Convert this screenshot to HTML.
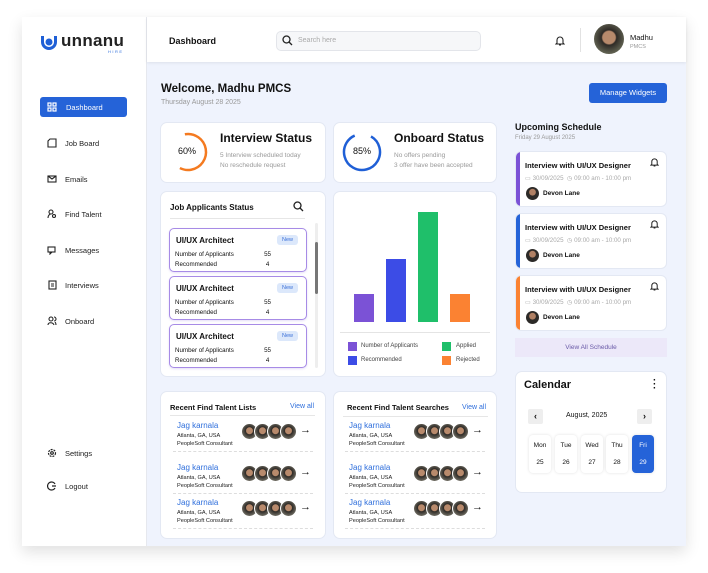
<!DOCTYPE html>
<html><head><meta charset="utf-8"><style>
*{box-sizing:border-box;margin:0;padding:0}
body{width:708px;height:573px;background:#fff;font-family:"Liberation Sans",sans-serif;color:#111;position:relative;overflow:hidden}
.a{position:absolute}
#app{left:22px;top:17px;width:664px;height:529px;background:#eff3fd;box-shadow:0 6px 14px rgba(0,0,0,.12)}
.side{left:22px;top:17px;width:125px;height:529px;background:#fff;border-right:1px solid #e6e8ee}
.hdr{left:147px;top:17px;width:539px;height:45px;background:#fff;box-shadow:0 1px 3px rgba(0,0,0,.08)}
.nav{left:47px;font-size:7.5px;color:#222;display:flex;align-items:center;gap:8px}
.nav svg{width:10px;height:10px}
.card{background:#fff;border-radius:7px;border:1px solid #e3e8f3}
.job{left:169px;width:138px;height:44px;border:1px solid #a78be6;border-radius:5px;background:#fff;box-shadow:0 1px 2px rgba(120,90,220,.2)}
.job b{position:absolute;left:6px;top:7px;font-size:8px}
.job .nw{position:absolute;right:8px;top:6px;background:#dce8fb;color:#3a6fd8;font-size:5.5px;padding:2px 5px;border-radius:3px}
.job .r1,.job .r2{position:absolute;left:5px;font-size:6.2px;width:96px}
.job .r1{top:22px}.job .r2{top:32px}
.job span.v{position:absolute;right:0}
.sch{left:515px;width:152px;height:56px;background:#fff;border-radius:6px;border:1px solid #e3e8f3;overflow:hidden}
.sch .bar{position:absolute;left:0;top:0;width:4px;height:100%}
.sch .tt{position:absolute;left:9px;top:9px;font-size:7.5px;font-weight:bold}
.sch .dt{position:absolute;left:9px;top:23px;font-size:6.2px;color:#aaa}
.sch .av{position:absolute;left:10px;top:35px;width:13px;height:13px;border-radius:50%;background:radial-gradient(circle at 50% 40%,#b08064 30%,#2c2a28 36%)}
.sch .nm{position:absolute;left:27px;top:38px;font-size:6.5px;font-weight:bold}
.sch .bell{position:absolute;right:7px;top:5px}
.row{position:absolute;width:140px;height:34px;border-bottom:1px dashed #ddd}
.row .n{position:absolute;left:4px;top:3px;color:#2f6fdc;font-size:8px}
.row .l{position:absolute;left:4px;top:14px;font-size:5.6px;line-height:8px;color:#222}
.row .avs{position:absolute;left:68px;top:5px;display:flex}
.row .avs i{width:17px;height:17px;border-radius:50%;margin-right:-4px;border:1px solid #fff;background:radial-gradient(circle at 50% 45%,#b88a6c 28%,#2e2a26 34%,#6d6a60 72%)}
.row .ar{position:absolute;right:2px;top:6px;font-size:11px}
.day{position:absolute;top:435px;width:22px;height:38px;border-radius:4px;background:#fff;box-shadow:0 0 3px rgba(0,0,0,.12);text-align:center;font-size:6.5px}
.day div{margin-top:7px}.day p{margin-top:10px}
</style></head><body>
<div class="a" id="app"></div>
<div class="a side"></div>
<div class="a hdr"></div>
<svg class="a" style="left:39px;top:34px" width="20" height="18" viewBox="0 0 20 18"><path d="M2 2v6a8 8 0 0 0 16 0V2h-3v6a5 5 0 0 1-10 0V2z" fill="#1f5fd6"/><circle cx="10" cy="8" r="3.5" fill="#1f5fd6"/></svg>
<div class="a" style="left:61px;top:31px;font-size:17px;font-weight:bold;letter-spacing:.3px;color:#222">unnanu</div>
<div class="a" style="left:108px;top:49px;font-size:4px;color:#2f6fdc;letter-spacing:1.5px">HIRE</div>
<div class="a" style="left:40px;top:97px;width:87px;height:20px;background:#2563d8;border-radius:3px"></div>
<div class="a nav" style="top:102px;color:#fff"><svg viewBox="0 0 10 10" fill="none" stroke="#fff" stroke-width="1.2"><rect x="1" y="1" width="3" height="3"/><rect x="6" y="1" width="3" height="3"/><rect x="1" y="6" width="3" height="3"/><rect x="6" y="6" width="3" height="3"/></svg><span style="margin-left:1px">Dashboard</span></div>
<div class="a nav" style="top:138px"><svg viewBox="0 0 10 10" fill="none" stroke="#222" stroke-width="1.1"><path d="M3 1h6v8H1V3z"/></svg>Job Board</div>
<div class="a nav" style="top:174px"><svg viewBox="0 0 10 10" fill="none" stroke="#222" stroke-width="1.1"><rect x="1" y="2" width="8" height="6"/><path d="M1 2l4 3 4-3"/></svg>Emails</div>
<div class="a nav" style="top:209px"><svg viewBox="0 0 10 10" fill="none" stroke="#222" stroke-width="1.1"><circle cx="4" cy="3" r="2"/><path d="M1 9c0-3 2-4 3-4"/><circle cx="7" cy="7" r="1.5"/></svg>Find Talent</div>
<div class="a nav" style="top:245px"><svg viewBox="0 0 10 10" fill="none" stroke="#222" stroke-width="1.1"><rect x="1" y="2" width="7" height="5"/><path d="M3 7v2l2-2"/></svg>Messages</div>
<div class="a nav" style="top:280px"><svg viewBox="0 0 10 10" fill="none" stroke="#222" stroke-width="1.1"><rect x="2" y="1" width="7" height="8"/><path d="M4 4h3M4 6h3"/></svg>Interviews</div>
<div class="a nav" style="top:316px"><svg viewBox="0 0 10 10" fill="none" stroke="#222" stroke-width="1.1"><circle cx="4" cy="3" r="2"/><path d="M1 9c0-3 5-3 6 0M7 1a2 2 0 0 1 0 4M8 6c1 1 1 2 1 3"/></svg>Onboard</div>
<div class="a nav" style="top:448px"><svg viewBox="0 0 10 10" fill="none" stroke="#222" stroke-width="1.2"><circle cx="5" cy="5" r="3.5" stroke-dasharray="2 1"/><circle cx="5" cy="5" r="1.3"/></svg>Settings</div>
<div class="a nav" style="top:481px"><svg viewBox="0 0 10 10" fill="none" stroke="#222" stroke-width="1.2"><path d="M8 3a4 4 0 1 0 0 4M5 5h4"/></svg>Logout</div>
<div class="a" style="left:169px;top:36px;font-size:9px;font-weight:bold">Dashboard</div>
<div class="a" style="left:276px;top:31px;width:205px;height:20px;background:#f6f7f9;border:1px solid #e3e5ea;border-radius:5px"></div>
<svg class="a" style="left:282px;top:35px" width="11" height="11" viewBox="0 0 11 11" fill="none" stroke="#222" stroke-width="1.3"><circle cx="4.5" cy="4.5" r="3.5"/><path d="M7 7l3 3"/></svg>
<div class="a" style="left:298px;top:37px;font-size:7px;color:#aaa">Search here</div>
<svg class="a" style="left:555px;top:35px" width="10" height="11" viewBox="0 0 10 11" fill="none" stroke="#222" stroke-width="1.1"><path d="M2 8V5a3 3 0 0 1 6 0v3l1 1H1zM4 10h2"/></svg>
<div class="a" style="left:580px;top:28px;width:1px;height:24px;background:#e2e2e2"></div>
<div class="a" style="left:594px;top:24px;width:30px;height:30px;border-radius:50%;background:radial-gradient(circle at 50% 45%,#b88a6c 28%,#2e2a26 34%,#5f6050 70%)"></div>
<div class="a" style="left:630px;top:33px;font-size:7.5px">Madhu</div>
<div class="a" style="left:630px;top:44px;font-size:5.5px;color:#999">PMCS</div>
<div class="a" style="left:161px;top:83px;font-size:11.5px;font-weight:bold">Welcome, Madhu PMCS</div>
<div class="a" style="left:161px;top:99px;font-size:7px;color:#999">Thursday August 28 2025</div>
<div class="a" style="left:589px;top:83px;width:78px;height:20px;background:#2563d8;border-radius:3px;color:#fff;font-size:7.5px;text-align:center;line-height:20px">Manage Widgets</div>
<div class="a card" style="left:160px;top:122px;width:166px;height:61px"></div>
<svg class="a" style="left:167px;top:131px" width="42" height="42" viewBox="0 0 42 42"><circle cx="21" cy="21" r="18" fill="none" stroke="#f47a20" stroke-width="2.5" stroke-dasharray="68 45" transform="rotate(-100 21 21)"/></svg>
<div class="a" style="left:178px;top:146px;font-size:9px">60%</div>
<div class="a" style="left:220px;top:131px;font-size:12px;font-weight:bold">Interview Status</div>
<div class="a" style="left:220px;top:151px;font-size:6.5px;color:#999;line-height:10px">5 Interview scheduled today<br>No reschedule request</div>
<div class="a card" style="left:333px;top:122px;width:164px;height:61px"></div>
<svg class="a" style="left:341px;top:131px" width="42" height="42" viewBox="0 0 42 42"><circle cx="21" cy="21" r="18" fill="none" stroke="#1f5fd6" stroke-width="2.5" stroke-dasharray="96 17" transform="rotate(-60 21 21)"/></svg>
<div class="a" style="left:353px;top:146px;font-size:9px">85%</div>
<div class="a" style="left:394px;top:131px;font-size:12px;font-weight:bold">Onboard Status</div>
<div class="a" style="left:394px;top:151px;font-size:6.5px;color:#999;line-height:10px">No offers pending<br>3 offer have been accepted</div>
<div class="a card" style="left:160px;top:191px;width:166px;height:186px"></div>
<div class="a" style="left:170px;top:203px;font-size:8px;font-weight:bold">Job Applicants Status</div>
<svg class="a" style="left:293px;top:201px" width="11" height="11" viewBox="0 0 11 11" fill="none" stroke="#222" stroke-width="1.3"><circle cx="4.5" cy="4.5" r="3.5"/><path d="M7 7l3 3"/></svg>
<div class="a" style="left:170px;top:218px;width:135px;height:1px;background:#e6e6e6"></div>
<div class="a" style="left:315px;top:223px;width:3px;height:145px;background:#eee;border-radius:2px"></div>
<div class="a" style="left:315px;top:242px;width:3px;height:52px;background:#777;border-radius:2px"></div>
<div class="a job" style="top:228px"><b>UI/UX Architect</b><span class="nw">New</span><div class="r1">Number of Applicants<span class="v">55</span></div><div class="r2">Recommended<span class="v">4&nbsp;</span></div></div>
<div class="a job" style="top:276px"><b>UI/UX Architect</b><span class="nw">New</span><div class="r1">Number of Applicants<span class="v">55</span></div><div class="r2">Recommended<span class="v">4&nbsp;</span></div></div>
<div class="a job" style="top:324px"><b>UI/UX Architect</b><span class="nw">New</span><div class="r1">Number of Applicants<span class="v">55</span></div><div class="r2">Recommended<span class="v">4&nbsp;</span></div></div>
<div class="a card" style="left:333px;top:191px;width:164px;height:186px"></div>
<div class="a" style="left:354px;top:294px;width:20px;height:28px;background:#7b52d6"></div>
<div class="a" style="left:386px;top:259px;width:20px;height:63px;background:#3c4ce6"></div>
<div class="a" style="left:418px;top:212px;width:20px;height:110px;background:#1fbf6a"></div>
<div class="a" style="left:450px;top:294px;width:20px;height:28px;background:#fb8232"></div>
<div class="a" style="left:340px;top:332px;width:150px;height:1px;background:#e4e4e4"></div>
<div class="a" style="left:348px;top:342px;width:9px;height:9px;background:#7b52d6"></div>
<div class="a" style="left:361px;top:343px;font-size:6px;color:#444">Number of Applicants</div>
<div class="a" style="left:348px;top:356px;width:9px;height:9px;background:#3c4ce6"></div>
<div class="a" style="left:361px;top:357px;font-size:6px;color:#444">Recommended</div>
<div class="a" style="left:442px;top:342px;width:9px;height:9px;background:#1fbf6a"></div>
<div class="a" style="left:456px;top:343px;font-size:6px;color:#444">Applied</div>
<div class="a" style="left:442px;top:356px;width:9px;height:9px;background:#fb8232"></div>
<div class="a" style="left:456px;top:357px;font-size:6px;color:#444">Rejected</div>
<div class="a card" style="left:160px;top:391px;width:166px;height:148px"></div>
<div class="a" style="left:170px;top:403px;font-size:7.5px;font-weight:bold">Recent Find Talent Lists</div>
<div class="a" style="left:290px;top:403px;font-size:7px;color:#2f6fdc">View all</div>
<div class="a" style="left:170px;top:415px;width:145px;height:1px;background:#e6e6e6"></div>
<div class="row" style="left:173px;top:418px"><div class="n">Jag karnala</div><div class="l">Atlanta, GA, USA<br>PeopleSoft Consultant</div><div class="avs"><i></i><i></i><i></i><i></i></div><div class="ar">→</div></div>
<div class="row" style="left:173px;top:460px"><div class="n">Jag karnala</div><div class="l">Atlanta, GA, USA<br>PeopleSoft Consultant</div><div class="avs"><i></i><i></i><i></i><i></i></div><div class="ar">→</div></div>
<div class="row" style="left:173px;top:495px"><div class="n">Jag karnala</div><div class="l">Atlanta, GA, USA<br>PeopleSoft Consultant</div><div class="avs"><i></i><i></i><i></i><i></i></div><div class="ar">→</div></div>
<div class="a card" style="left:333px;top:391px;width:164px;height:148px"></div>
<div class="a" style="left:347px;top:403px;font-size:7.5px;font-weight:bold">Recent Find Talent Searches</div>
<div class="a" style="left:462px;top:404px;font-size:7px;color:#2f6fdc">View all</div>
<div class="a" style="left:343px;top:416px;width:145px;height:1px;background:#e6e6e6"></div>
<div class="row" style="left:345px;top:418px"><div class="n">Jag karnala</div><div class="l">Atlanta, GA, USA<br>PeopleSoft Consultant</div><div class="avs"><i></i><i></i><i></i><i></i></div><div class="ar">→</div></div>
<div class="row" style="left:345px;top:460px"><div class="n">Jag karnala</div><div class="l">Atlanta, GA, USA<br>PeopleSoft Consultant</div><div class="avs"><i></i><i></i><i></i><i></i></div><div class="ar">→</div></div>
<div class="row" style="left:345px;top:495px"><div class="n">Jag karnala</div><div class="l">Atlanta, GA, USA<br>PeopleSoft Consultant</div><div class="avs"><i></i><i></i><i></i><i></i></div><div class="ar">→</div></div>
<div class="a" style="left:515px;top:122px;font-size:9px;font-weight:bold">Upcoming Schedule</div>
<div class="a" style="left:515px;top:135px;font-size:6px;color:#999">Friday 29 August 2025</div>
<div class="a sch" style="top:151px"><div class="bar" style="background:#7b52d6"></div><div class="tt">Interview with UI/UX Designer</div><div class="dt">▭ 30/09/2025 &nbsp;◷ 09:00 am - 10:00 pm</div><div class="av"></div><div class="nm">Devon Lane</div><svg class="bell" width="9" height="10" viewBox="0 0 10 11" fill="none" stroke="#222" stroke-width="1.1"><path d="M2 8V5a3 3 0 0 1 6 0v3l1 1H1zM4 10h2"/></svg></div>
<div class="a sch" style="top:213px"><div class="bar" style="background:#2563d8"></div><div class="tt">Interview with UI/UX Designer</div><div class="dt">▭ 30/09/2025 &nbsp;◷ 09:00 am - 10:00 pm</div><div class="av"></div><div class="nm">Devon Lane</div><svg class="bell" width="9" height="10" viewBox="0 0 10 11" fill="none" stroke="#222" stroke-width="1.1"><path d="M2 8V5a3 3 0 0 1 6 0v3l1 1H1zM4 10h2"/></svg></div>
<div class="a sch" style="top:275px"><div class="bar" style="background:#fb8232"></div><div class="tt">Interview with UI/UX Designer</div><div class="dt">▭ 30/09/2025 &nbsp;◷ 09:00 am - 10:00 pm</div><div class="av"></div><div class="nm">Devon Lane</div><svg class="bell" width="9" height="10" viewBox="0 0 10 11" fill="none" stroke="#222" stroke-width="1.1"><path d="M2 8V5a3 3 0 0 1 6 0v3l1 1H1zM4 10h2"/></svg></div>
<div class="a" style="left:515px;top:338px;width:152px;height:19px;background:#ece8f9;color:#6a5aa8;font-size:6.5px;text-align:center;line-height:19px">View All Schedule</div>
<div class="a card" style="left:515px;top:371px;width:152px;height:122px"></div>
<div class="a" style="left:524px;top:379px;font-size:11px;font-weight:bold">Calendar</div>
<div class="a" style="left:653px;top:379px;font-size:10px;font-weight:bold;line-height:4px">·<br>·<br>·</div>
<div class="a" style="left:528px;top:409px;width:15px;height:15px;background:#eee;border-radius:2px;font-size:9px;text-align:center;line-height:15px;font-weight:bold">‹</div>
<div class="a" style="left:637px;top:409px;width:15px;height:15px;background:#eee;border-radius:2px;font-size:9px;text-align:center;line-height:15px;font-weight:bold">›</div>
<div class="a" style="left:566px;top:412px;font-size:7px">August, 2025</div>
<div class="day" style="left:529px"><div>Mon</div><p>25</p></div>
<div class="day" style="left:555px"><div>Tue</div><p>26</p></div>
<div class="day" style="left:581px"><div>Wed</div><p>27</p></div>
<div class="day" style="left:606px"><div>Thu</div><p>28</p></div>
<div class="day" style="left:632px;background:#2563d8;color:#fff"><div>Fri</div><p>29</p></div>
</body></html>
